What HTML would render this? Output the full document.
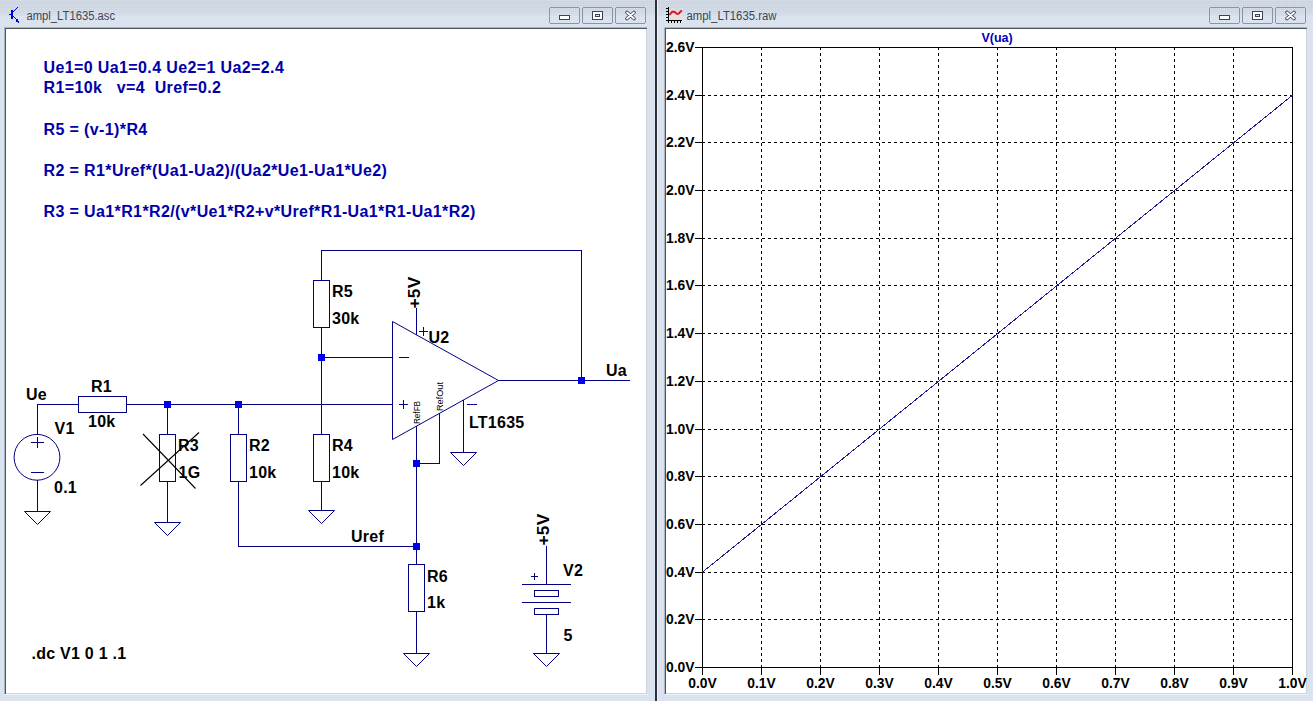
<!DOCTYPE html>
<html><head><meta charset="utf-8"><style>
html,body{margin:0;padding:0;width:1313px;height:701px;overflow:hidden;background:#d3e0ee;}
svg{position:absolute;left:0;top:0;}
text{font-family:"Liberation Sans",sans-serif;}
.ax{font-family:"Liberation Sans",sans-serif;font-weight:bold;font-size:14px;fill:#000;}
path,rect,line{shape-rendering:crispEdges;}
.g{shape-rendering:geometricPrecision;}
</style></head><body>
<svg width="1313" height="701" viewBox="0 0 1313 701">
<defs>
<linearGradient id="tb" x1="0" y1="0" x2="0" y2="1">
<stop offset="0" stop-color="#ccd7e4"/><stop offset="0.1" stop-color="#c6d2e1"/><stop offset="0.75" stop-color="#c9d6e5"/><stop offset="1" stop-color="#d0ddec"/>
</linearGradient>
<pattern id="dith" width="2" height="2" patternUnits="userSpaceOnUse"><rect width="1" height="1" fill="#ffffff" fill-opacity="0.3"/><rect x="1" y="1" width="1" height="1" fill="#ffffff" fill-opacity="0.12"/></pattern>
</defs>
<rect x="0" y="0" width="1313" height="701" fill="#d2e0ef"/>
<rect x="0" y="0" width="1313" height="16" fill="url(#tb)"/>
<rect x="0" y="0" width="1313" height="701" fill="url(#dith)"/>
<!-- left window client -->
<rect x="5" y="28" width="642" height="666" fill="#fff"/>
<path d="M4 27.5H647M4.5 27V694" stroke="#aab6c5"/><path d="M5 28.5H647M5.5 28V694" stroke="#4e545c"/>
<path d="M646.5 29V694M6 693.5H647" stroke="#cdd5dc"/><path d="M5 694.5H648" stroke="#eef5fa"/>
<!-- divider -->
<path d="M655.5 0V701M656.5 0V701" stroke="#2c3036"/>
<path d="M657.5 0V701" stroke="#eef3f8"/>
<!-- right window client -->
<rect x="665" y="28" width="642" height="666" fill="#fff"/>
<path d="M664 27.5H1307M664.5 27V694" stroke="#aab6c5"/><path d="M665 28.5H1307M665.5 28V694" stroke="#4e545c"/>
<path d="M1306.5 29V694M666 693.5H1307" stroke="#cdd5dc"/><path d="M665 694.5H1308" stroke="#eef5fa"/>
<!-- titles -->
<text x="26.5" y="19.5" font-size="12" fill="#3b4754" textLength="88.5" lengthAdjust="spacingAndGlyphs">ampl_LT1635.asc</text>
<text x="686.5" y="19.5" font-size="12" fill="#3b4754" textLength="90" lengthAdjust="spacingAndGlyphs">ampl_LT1635.raw</text>
<!-- left icon: transistor -->
<g stroke="#0000c8" class="g">
<path d="M8.5 14.5H12" stroke-width="1"/>
<path d="M12 10V19" stroke-width="2" style="shape-rendering:crispEdges"/>
<path d="M13 12L18 7" stroke-width="1"/>
<path d="M13 16L18.5 22" stroke-width="1"/>
</g>
<path d="M15 21L18.5 22.5L17.5 18.5Z" fill="#0000c8"/>
<!-- right icon: chart -->
<path d="M669.5 11L672.5 8.5L677.5 10.5L682 8V19H669.5Z" fill="#e9e0df" class="g"/>
<path d="M669.3 14.8L672.3 11.6L674.5 11.9L677 13.9L678.6 13.6L681.8 10.3" stroke="#f6b4bc" stroke-width="3.2" fill="none" class="g"/>
<path d="M669.3 14.8L672.3 11.6L674.5 11.9L677 13.9L678.6 13.6L681.8 10.3" stroke="#c41a30" stroke-width="1.7" fill="none" class="g"/>
<path d="M668 7H669V23H668ZM666 20H682V21H666ZM666 8H668V9H666ZM666 11H668V12H666ZM666 14H668V15H666ZM666 17H668V18H666ZM671 21H672V23H671ZM674 21H675V23H674ZM677 21H678V23H677ZM680 21H681V23H680Z" fill="#000"/>
<rect x="549.5" y="7.5" width="30" height="16" rx="2" fill="none" stroke="#8696a8" stroke-width="1"/><rect x="582.5" y="7.5" width="30" height="16" rx="2" fill="none" stroke="#8696a8" stroke-width="1"/><rect x="615.5" y="7.5" width="30" height="16" rx="2" fill="none" stroke="#8696a8" stroke-width="1"/><rect x="559.5" y="15.5" width="10" height="4" rx="1" fill="#fff" stroke="#3a4654"/><rect x="592.5" y="11.5" width="10" height="8" rx="1" fill="#fff" stroke="#3a4654"/><rect x="595.5" y="14.5" width="4" height="2" fill="#dfe6ee" stroke="#3a4654"/><path d="M627 12.5L634 18.5M634 12.5L627 18.5" stroke="#3a4654" stroke-width="3.6" stroke-linecap="round" class="g"/><path d="M627 12.5L634 18.5M634 12.5L627 18.5" stroke="#fff" stroke-width="1.8" stroke-linecap="round" class="g"/>
<rect x="1209.5" y="7.5" width="30" height="16" rx="2" fill="none" stroke="#8696a8" stroke-width="1"/><rect x="1242.5" y="7.5" width="30" height="16" rx="2" fill="none" stroke="#8696a8" stroke-width="1"/><rect x="1275.5" y="7.5" width="30" height="16" rx="2" fill="none" stroke="#8696a8" stroke-width="1"/><rect x="1219.5" y="15.5" width="10" height="4" rx="1" fill="#fff" stroke="#3a4654"/><rect x="1252.5" y="11.5" width="10" height="8" rx="1" fill="#fff" stroke="#3a4654"/><rect x="1255.5" y="14.5" width="4" height="2" fill="#dfe6ee" stroke="#3a4654"/><path d="M1287 12.5L1294 18.5M1294 12.5L1287 18.5" stroke="#3a4654" stroke-width="3.6" stroke-linecap="round" class="g"/><path d="M1287 12.5L1294 18.5M1294 12.5L1287 18.5" stroke="#fff" stroke-width="1.8" stroke-linecap="round" class="g"/>
<g><text x="43.5" y="72.6" font-size="16" fill="#0000a8" font-weight="bold" letter-spacing="0.38">Ue1=0 Ua1=0.4 Ue2=1 Ua2=2.4</text><text x="43.5" y="92.6" font-size="16" fill="#0000a8" font-weight="bold" letter-spacing="0.38">R1=10k&#160;&#160; v=4&#160; Uref=0.2</text><text x="43.5" y="134.9" font-size="16" fill="#0000a8" font-weight="bold" letter-spacing="0.38">R5 = (v-1)*R4</text><text x="43.5" y="175.9" font-size="16" fill="#0000a8" font-weight="bold" letter-spacing="0.38">R2 = R1*Uref*(Ua1-Ua2)/(Ua2*Ue1-Ua1*Ue2)</text><text x="43.5" y="217.1" font-size="16" fill="#0000a8" font-weight="bold" letter-spacing="0.38">R3 = Ua1*R1*R2/(v*Ue1*R2+v*Uref*R1-Ua1*R1-Ua1*R2)</text><path d="M37.5 404V435" stroke="#000080"/><circle cx="37" cy="457.3" r="22.9" fill="none" stroke="#000080" class="g"/><path d="M31 442.5H44" stroke="#000080"/><path d="M37.5 437V448" stroke="#000080"/><path d="M31 472.5H44" stroke="#000080"/><path d="M37.5 480V512" stroke="#000080"/><path d="M24.5 511.5H50.5L37.5 524.5Z" fill="none" stroke="#000080" class="g"/><path d="M37 404.5H79" stroke="#000080"/><rect x="78.5" y="396.5" width="48" height="16" fill="none" stroke="#000080"/><path d="M126 404.5H393" stroke="#000080"/><path d="M167.5 404V435" stroke="#000080"/><rect x="159.5" y="434.5" width="16" height="47" fill="none" stroke="#000080"/><path d="M167.5 481V523" stroke="#000080"/><path d="M154.5 522.5H180.5L167.5 535.5Z" fill="none" stroke="#000080" class="g"/><path d="M143 434L195.5 488.5M199 432.5L140.5 485.5" stroke="#000" class="g" stroke-width="1.1"/><path d="M238.5 404V435" stroke="#000080"/><rect x="230.5" y="434.5" width="16" height="47" fill="none" stroke="#000080"/><path d="M238.5 481V547" stroke="#000080"/><path d="M238 546.5H417" stroke="#000080"/><path d="M321.5 250V281" stroke="#000080"/><rect x="313.5" y="280.5" width="16" height="47" fill="none" stroke="#000080"/><path d="M321.5 327V435" stroke="#000080"/><rect x="313.5" y="434.5" width="16" height="47" fill="none" stroke="#000080"/><path d="M321.5 481V511" stroke="#000080"/><path d="M308.5 510.5H334.5L321.5 523.5Z" fill="none" stroke="#000080" class="g"/><path d="M321 250.5H582" stroke="#000080"/><path d="M581.5 250V381" stroke="#000080"/><path d="M321 357.5H393" stroke="#000080"/><path d="M392.5 321.5L498.5 380.5L392.5 439.5Z" fill="none" stroke="#000080" class="g"/><path d="M498 380.5H630" stroke="#000080"/><path d="M416.5 308V335" stroke="#000080"/><path d="M416.5 426V565" stroke="#000080"/><path d="M439.5 413V464" stroke="#000080"/><path d="M416 463.5H440" stroke="#000080"/><path d="M463.5 400V453" stroke="#000080"/><path d="M450.5 452.5H476.5L463.5 465.5Z" fill="none" stroke="#000080" class="g"/><path d="M399 357.5H409" stroke="#000080"/><path d="M399 404.5H408" stroke="#000080"/><path d="M403.5 400V409" stroke="#000080"/><path d="M419 331.5H428" stroke="#000080"/><path d="M423.5 327V336" stroke="#000080"/><path d="M467 404.5H477" stroke="#000080"/><rect x="408.5" y="564.5" width="16" height="47" fill="none" stroke="#000080"/><path d="M416.5 611V654" stroke="#000080"/><path d="M403.5 653.5H429.5L416.5 666.5Z" fill="none" stroke="#000080" class="g"/><path d="M546.5 546V585" stroke="#000080"/><path d="M522 584.5H571" stroke="#000080"/><rect x="534.5" y="590.5" width="24" height="6" fill="none" stroke="#000080"/><path d="M522 602.5H571" stroke="#000080"/><rect x="534.5" y="608.5" width="24" height="6" fill="none" stroke="#000080"/><path d="M546.5 614V654" stroke="#000080"/><path d="M533.5 653.5H559.5L546.5 666.5Z" fill="none" stroke="#000080" class="g"/><path d="M531 576.5H538" stroke="#000080"/><path d="M534.5 573V580" stroke="#000080"/><rect x="164" y="401" width="7" height="7" fill="#0000f0"/><rect x="235" y="401" width="7" height="7" fill="#0000f0"/><rect x="318" y="354" width="7" height="7" fill="#0000f0"/><rect x="578" y="377" width="7" height="7" fill="#0000f0"/><rect x="413" y="460" width="7" height="7" fill="#0000f0"/><rect x="413" y="543" width="7" height="7" fill="#0000f0"/><text x="26" y="399.5" font-size="16" fill="#000" font-weight="bold" letter-spacing="0.25" >Ue</text><text x="91" y="391.8" font-size="16" fill="#000" font-weight="bold" letter-spacing="0.25" >R1</text><text x="88" y="426.5" font-size="16" fill="#000" font-weight="bold" letter-spacing="0.25" >10k</text><text x="54.5" y="433.5" font-size="16" fill="#000" font-weight="bold" letter-spacing="0.25" >V1</text><text x="54" y="492.6" font-size="16" fill="#000" font-weight="bold" letter-spacing="0.25" >0.1</text><text x="178" y="450.8" font-size="16" fill="#000" font-weight="bold" letter-spacing="0.25" >R3</text><text x="178.5" y="478.2" font-size="16" fill="#000" font-weight="bold" letter-spacing="0.25" >1G</text><text x="249" y="450.8" font-size="16" fill="#000" font-weight="bold" letter-spacing="0.25" >R2</text><text x="249" y="478.2" font-size="16" fill="#000" font-weight="bold" letter-spacing="0.25" >10k</text><text x="332" y="450.8" font-size="16" fill="#000" font-weight="bold" letter-spacing="0.25" >R4</text><text x="332" y="478.2" font-size="16" fill="#000" font-weight="bold" letter-spacing="0.25" >10k</text><text x="332" y="297" font-size="16" fill="#000" font-weight="bold" letter-spacing="0.25" >R5</text><text x="332" y="324.3" font-size="16" fill="#000" font-weight="bold" letter-spacing="0.25" >30k</text><text x="428.5" y="342.7" font-size="16" fill="#000" font-weight="bold" letter-spacing="0.25" >U2</text><text x="469" y="427.6" font-size="16" fill="#000" font-weight="bold" letter-spacing="0.25" >LT1635</text><text x="606" y="375.8" font-size="16" fill="#000" font-weight="bold" letter-spacing="0.25" >Ua</text><text x="351" y="542.4" font-size="16" fill="#000" font-weight="bold" letter-spacing="0.25" >Uref</text><text x="427" y="582" font-size="16" fill="#000" font-weight="bold" letter-spacing="0.25" >R6</text><text x="427" y="607.8" font-size="16" fill="#000" font-weight="bold" letter-spacing="0.25" >1k</text><text x="563" y="575.5" font-size="16" fill="#000" font-weight="bold" letter-spacing="0.25" >V2</text><text x="563.6" y="641" font-size="16" fill="#000" font-weight="bold" letter-spacing="0.25" >5</text><text x="31.5" y="658.8" font-size="16" fill="#000" font-weight="bold" letter-spacing="0.25" >.dc V1 0 1 .1</text><text x="0" y="0" font-size="16" fill="#000" font-weight="bold" letter-spacing="0.25" transform="translate(419.5,308.5) rotate(-90)" font-size="16.5" textLength="32" lengthAdjust="spacingAndGlyphs">+5V</text><text x="0" y="0" font-size="16" fill="#000" font-weight="bold" letter-spacing="0.25" transform="translate(549,545.5) rotate(-90)" font-size="16.5" textLength="32" lengthAdjust="spacingAndGlyphs">+5V</text><text x="0" y="0" font-size="8.5" fill="#000" transform="translate(419.5,424) rotate(-90)" textLength="23" lengthAdjust="spacingAndGlyphs">RefFB</text><text x="0" y="0" font-size="8.5" fill="#000" transform="translate(442.5,411) rotate(-90)" textLength="29" lengthAdjust="spacingAndGlyphs">RefOut</text></g>
<g><path d="M761.5 47V667" stroke="#000" stroke-dasharray="3 3"/><path d="M820.5 47V667" stroke="#000" stroke-dasharray="3 3"/><path d="M879.5 47V667" stroke="#000" stroke-dasharray="3 3"/><path d="M938.5 47V667" stroke="#000" stroke-dasharray="3 3"/><path d="M997.5 47V667" stroke="#000" stroke-dasharray="3 3"/><path d="M1056.5 47V667" stroke="#000" stroke-dasharray="3 3"/><path d="M1115.5 47V667" stroke="#000" stroke-dasharray="3 3"/><path d="M1174.5 47V667" stroke="#000" stroke-dasharray="3 3"/><path d="M1233.5 47V667" stroke="#000" stroke-dasharray="3 3"/><path d="M702 619.5H1292" stroke="#000" stroke-dasharray="3 3"/><path d="M702 572.5H1292" stroke="#000" stroke-dasharray="3 3"/><path d="M702 524.5H1292" stroke="#000" stroke-dasharray="3 3"/><path d="M702 476.5H1292" stroke="#000" stroke-dasharray="3 3"/><path d="M702 429.5H1292" stroke="#000" stroke-dasharray="3 3"/><path d="M702 381.5H1292" stroke="#000" stroke-dasharray="3 3"/><path d="M702 333.5H1292" stroke="#000" stroke-dasharray="3 3"/><path d="M702 285.5H1292" stroke="#000" stroke-dasharray="3 3"/><path d="M702 238.5H1292" stroke="#000" stroke-dasharray="3 3"/><path d="M702 190.5H1292" stroke="#000" stroke-dasharray="3 3"/><path d="M702 142.5H1292" stroke="#000" stroke-dasharray="3 3"/><path d="M702 95.5H1292" stroke="#000" stroke-dasharray="3 3"/><rect x="702.5" y="47.5" width="590" height="620" fill="none" stroke="#000"/><path d="M695 667.5H702" stroke="#000"/><text x="694.5" y="672" text-anchor="end" class="ax" textLength="28.5" lengthAdjust="spacingAndGlyphs">0.0V</text><path d="M695 619.5H702" stroke="#000"/><text x="694.5" y="624" text-anchor="end" class="ax" textLength="28.5" lengthAdjust="spacingAndGlyphs">0.2V</text><path d="M695 572.5H702" stroke="#000"/><text x="694.5" y="577" text-anchor="end" class="ax" textLength="28.5" lengthAdjust="spacingAndGlyphs">0.4V</text><path d="M695 524.5H702" stroke="#000"/><text x="694.5" y="529" text-anchor="end" class="ax" textLength="28.5" lengthAdjust="spacingAndGlyphs">0.6V</text><path d="M695 476.5H702" stroke="#000"/><text x="694.5" y="481" text-anchor="end" class="ax" textLength="28.5" lengthAdjust="spacingAndGlyphs">0.8V</text><path d="M695 429.5H702" stroke="#000"/><text x="694.5" y="434" text-anchor="end" class="ax" textLength="28.5" lengthAdjust="spacingAndGlyphs">1.0V</text><path d="M695 381.5H702" stroke="#000"/><text x="694.5" y="386" text-anchor="end" class="ax" textLength="28.5" lengthAdjust="spacingAndGlyphs">1.2V</text><path d="M695 333.5H702" stroke="#000"/><text x="694.5" y="338" text-anchor="end" class="ax" textLength="28.5" lengthAdjust="spacingAndGlyphs">1.4V</text><path d="M695 285.5H702" stroke="#000"/><text x="694.5" y="290" text-anchor="end" class="ax" textLength="28.5" lengthAdjust="spacingAndGlyphs">1.6V</text><path d="M695 238.5H702" stroke="#000"/><text x="694.5" y="243" text-anchor="end" class="ax" textLength="28.5" lengthAdjust="spacingAndGlyphs">1.8V</text><path d="M695 190.5H702" stroke="#000"/><text x="694.5" y="195" text-anchor="end" class="ax" textLength="28.5" lengthAdjust="spacingAndGlyphs">2.0V</text><path d="M695 142.5H702" stroke="#000"/><text x="694.5" y="147" text-anchor="end" class="ax" textLength="28.5" lengthAdjust="spacingAndGlyphs">2.2V</text><path d="M695 95.5H702" stroke="#000"/><text x="694.5" y="100" text-anchor="end" class="ax" textLength="28.5" lengthAdjust="spacingAndGlyphs">2.4V</text><path d="M695 47.5H702" stroke="#000"/><text x="694.5" y="52" text-anchor="end" class="ax" textLength="28.5" lengthAdjust="spacingAndGlyphs">2.6V</text><path d="M702.5 667V675" stroke="#000"/><text x="702.5" y="688" text-anchor="middle" class="ax" textLength="28.5" lengthAdjust="spacingAndGlyphs">0.0V</text><path d="M761.5 667V675" stroke="#000"/><text x="761.5" y="688" text-anchor="middle" class="ax" textLength="28.5" lengthAdjust="spacingAndGlyphs">0.1V</text><path d="M820.5 667V675" stroke="#000"/><text x="820.5" y="688" text-anchor="middle" class="ax" textLength="28.5" lengthAdjust="spacingAndGlyphs">0.2V</text><path d="M879.5 667V675" stroke="#000"/><text x="879.5" y="688" text-anchor="middle" class="ax" textLength="28.5" lengthAdjust="spacingAndGlyphs">0.3V</text><path d="M938.5 667V675" stroke="#000"/><text x="938.5" y="688" text-anchor="middle" class="ax" textLength="28.5" lengthAdjust="spacingAndGlyphs">0.4V</text><path d="M997.5 667V675" stroke="#000"/><text x="997.5" y="688" text-anchor="middle" class="ax" textLength="28.5" lengthAdjust="spacingAndGlyphs">0.5V</text><path d="M1056.5 667V675" stroke="#000"/><text x="1056.5" y="688" text-anchor="middle" class="ax" textLength="28.5" lengthAdjust="spacingAndGlyphs">0.6V</text><path d="M1115.5 667V675" stroke="#000"/><text x="1115.5" y="688" text-anchor="middle" class="ax" textLength="28.5" lengthAdjust="spacingAndGlyphs">0.7V</text><path d="M1174.5 667V675" stroke="#000"/><text x="1174.5" y="688" text-anchor="middle" class="ax" textLength="28.5" lengthAdjust="spacingAndGlyphs">0.8V</text><path d="M1233.5 667V675" stroke="#000"/><text x="1233.5" y="688" text-anchor="middle" class="ax" textLength="28.5" lengthAdjust="spacingAndGlyphs">0.9V</text><path d="M1292.5 667V675" stroke="#000"/><text x="1292.5" y="688" text-anchor="middle" class="ax" textLength="28.5" lengthAdjust="spacingAndGlyphs">1.0V</text><text x="997" y="41.5" text-anchor="middle" font-size="12.5" font-weight="bold" fill="#0000c0">V(ua)</text><path d="M702.5 572.1L1292.5 95.20000000000005" stroke="#1e1e90"/></g>
</svg>
</body></html>
